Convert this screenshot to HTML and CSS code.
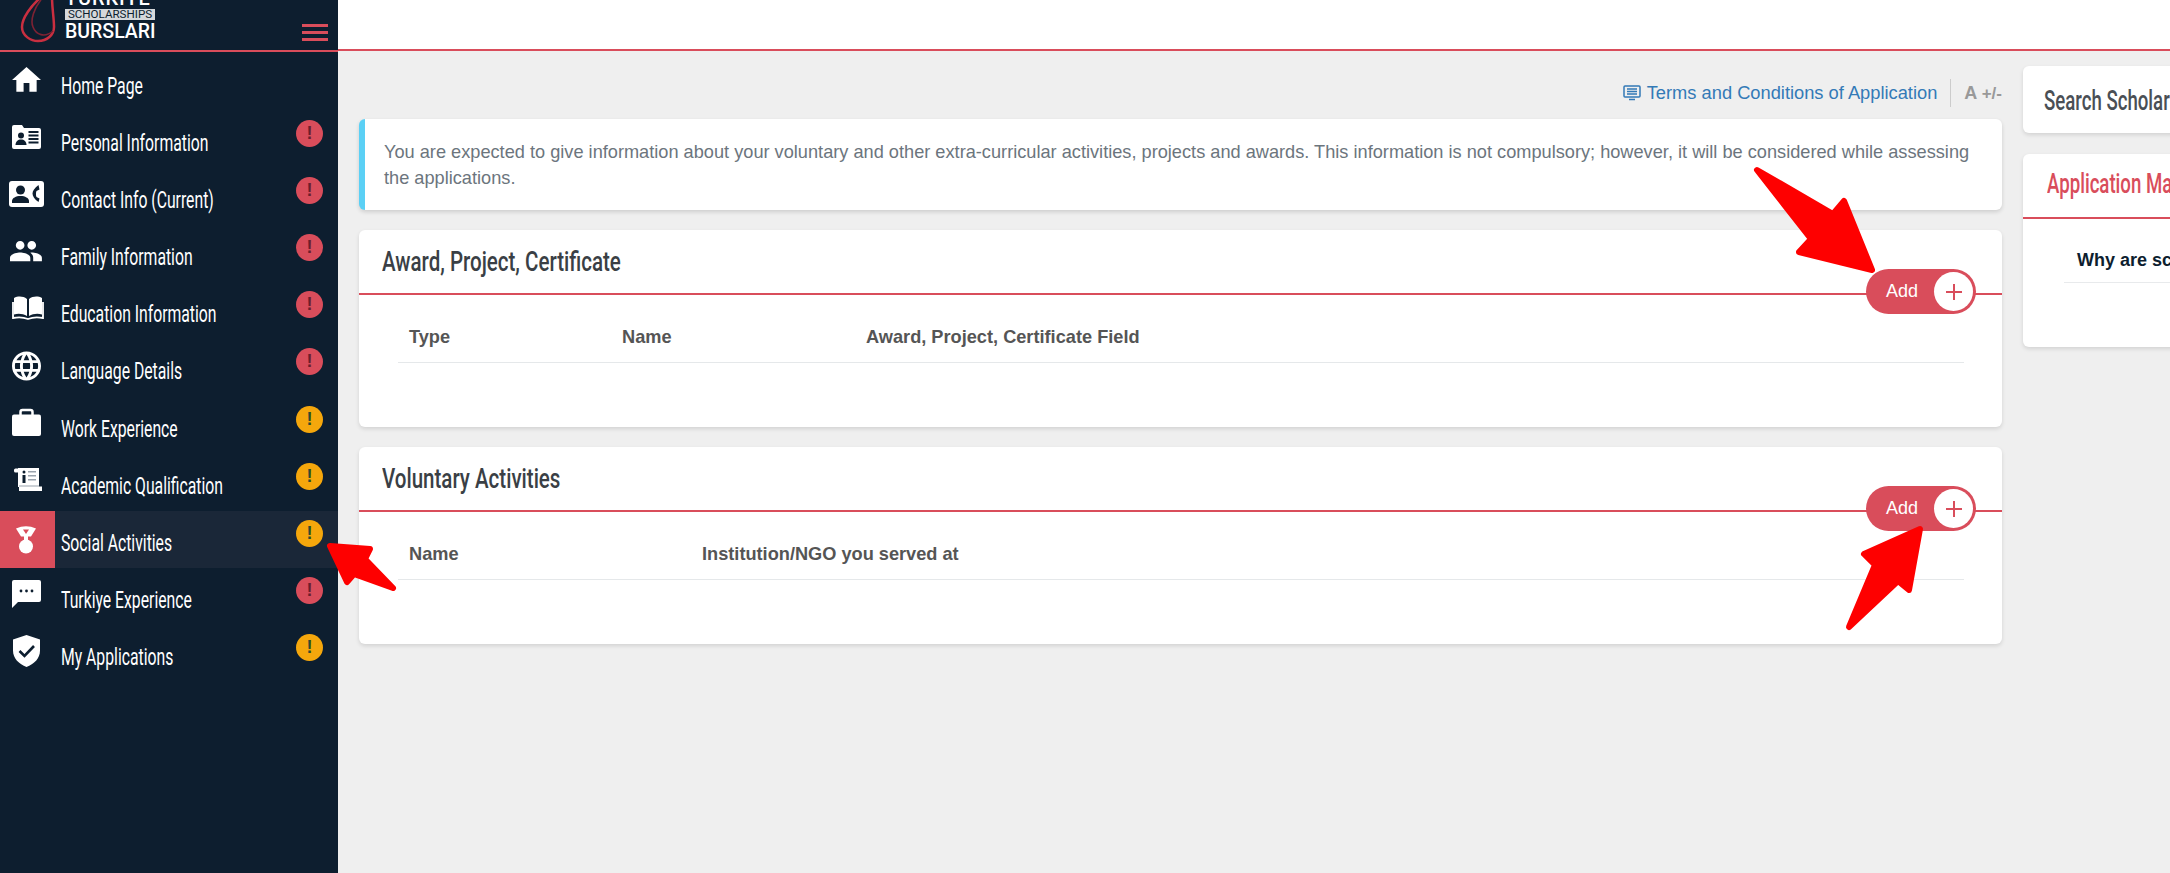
FILE: index.html
```html
<!DOCTYPE html>
<html lang="en">
<head>
<meta charset="utf-8">
<title>Social Activities</title>
<link rel="stylesheet" href="styles.css">
</head>
<body>
<div class="app">
  <aside class="sidebar">
    <div class="brand">
      <svg class="brand-mark" viewBox="0 0 40 50" aria-hidden="true">
        <path class="ring-a" d="M22-3C12 6 3 18 3 27c0 9 9 14 16 14 9 0 16-6 16-14 0-9-2-19-2-30"/>
        <path class="ring-b" d="M24-3C15 8 11 20 14 27c3 8 12 11 20 4"/>
      </svg>
      <div class="brand-text">
        <span class="brand-top">TÜRKİYE</span>
        <span class="brand-mid">SCHOLARSHIPS</span>
        <span class="brand-bottom">BURSLARI</span>
      </div>
      <div class="burger"><i></i><i></i><i></i></div>
    </div>
    <nav class="menu">
      <a class="item">
        <svg class="ico" viewBox="0 0 55 40"><path transform="translate(9.1 2.65) scale(1.45)" d="M10 20v-6h4v6h5v-8h3L12 3 2 12h3v8z"/></svg>
        <span class="label"><span>Home Page</span></span>
      </a>
      <a class="item">
        <svg class="ico" viewBox="0 0 55 40"><path d="M14 8h8l2 3h15a2 2 0 0 1 2 2v17a2 2 0 0 1-2 2H14a2 2 0 0 1-2-2V10a2 2 0 0 1 2-2z"/><g class="cut"><circle cx="21" cy="18.500" r="3"/><path d="M15.500 28c0-3.500 2.500-5.500 5.500-5.500s5.500 2 5.500 5.500z"/><rect x="28.500" y="14" width="10" height="2"/><rect x="28.500" y="17.500" width="10" height="2"/><rect x="28.500" y="21" width="10" height="2"/><rect x="28.500" y="24.500" width="10" height="2"/></g></svg>
        <span class="label"><span>Personal Information</span></span>
        <b class="badge red">!</b>
      </a>
      <a class="item">
        <svg class="ico" viewBox="0 0 55 40"><rect x="9" y="7" width="35" height="26" rx="3"/><g class="cut"><circle cx="20.500" cy="16" r="4.500"/><path d="M12 29v-2c0-3 4-5 8.500-5s8.500 2 8.500 5v2z"/><path d="M38.500 11c-4 3-6 6-6 8.500s2 6 6 8.500l1-3.500-3-1.500c-.7-1.500-.7-4.500 0-6l3-1.500z"/></g></svg>
        <span class="label"><span>Contact Info (Current)</span></span>
        <b class="badge red">!</b>
      </a>
      <a class="item">
        <svg class="ico" viewBox="0 0 55 40"><path transform="translate(8.55 2.75) scale(1.45)" d="M16 11c1.660 0 2.990-1.340 2.990-3S17.660 5 16 5c-1.660 0-3 1.340-3 3s1.340 3 3 3zm-8 0c1.660 0 2.990-1.340 2.990-3S9.660 5 8 5C6.340 5 5 6.340 5 8s1.340 3 3 3zm0 2c-2.330 0-7 1.170-7 3.500V19h14v-2.500c0-2.330-4.670-3.500-7-3.500zm8 0c-.29 0-.62.02-.97.05 1.160.84 1.970 1.970 1.970 3.450V19h6v-2.500c0-2.330-4.670-3.500-7-3.500z"/></svg>
        <span class="label"><span>Family Information</span></span>
        <b class="badge red">!</b>
      </a>
      <a class="item">
        <svg class="ico" viewBox="0 0 55 40"><path d="M14 10c4-2 9-2 13 1v17c-4-2.500-9-3-13-1.500z"/><path d="M29 11c4-3 9-3 13-1v16.500c-4-1.500-9-1-13 1.500z"/><path class="line" d="M13 14v16c5-1 10-1 15 1 5-2 10-2 15-1V14"/></svg>
        <span class="label"><span>Education Information</span></span>
        <b class="badge red">!</b>
      </a>
      <a class="item">
        <svg class="ico" viewBox="0 0 55 40"><path transform="translate(9.1 3.6) scale(1.45)" d="M11.99 2C6.47 2 2 6.48 2 12s4.47 10 9.99 10C17.52 22 22 17.52 22 12S17.52 2 11.99 2zm6.93 6h-2.95c-.32-1.25-.78-2.45-1.38-3.56 1.84.63 3.37 1.91 4.33 3.56zM12 4.040c.83 1.200 1.480 2.530 1.910 3.960h-3.820c.43-1.430 1.080-2.760 1.910-3.960zM4.260 14C4.100 13.360 4 12.690 4 12s.1-1.360.26-2h3.380c-.08.66-.14 1.320-.14 2 0 .68.06 1.340.14 2H4.260zm.82 2h2.950c.32 1.250.78 2.450 1.380 3.560-1.840-.63-3.370-1.900-4.330-3.560zm2.950-8H5.080c.96-1.660 2.490-2.930 4.330-3.560C8.810 5.550 8.350 6.750 8.030 8zM12 19.960c-.83-1.200-1.480-2.530-1.910-3.960h3.820c-.43 1.430-1.080 2.760-1.910 3.960zM14.340 14H9.660c-.09-.66-.16-1.320-.16-2 0-.68.07-1.350.16-2h4.680c.09.65.16 1.320.16 2 0 .68-.07 1.340-.16 2zm.25 5.560c.6-1.110 1.060-2.310 1.380-3.560h2.950c-.96 1.650-2.490 2.930-4.330 3.560zM16.360 14c.08-.66.14-1.320.14-2 0-.68-.06-1.340-.14-2h3.380c.16.64.26 1.310.26 2s-.1 1.360-.26 2h-3.380z"/></svg>
        <span class="label"><span>Language Details</span></span>
        <b class="badge red">!</b>
      </a>
      <a class="item">
        <svg class="ico" viewBox="0 0 55 40"><path class="line thick" d="M20.500 12V9a2 2 0 0 1 2-2h8a2 2 0 0 1 2 2v3"/><rect x="12" y="11.500" width="29" height="21.500" rx="2"/></svg>
        <span class="label"><span>Work Experience</span></span>
        <b class="badge amber">!</b>
      </a>
      <a class="item">
        <svg class="ico" viewBox="0 0 55 40"><rect x="18" y="8" width="21" height="19"/><rect x="14" y="8.500" width="5" height="4" rx="1.500"/><rect x="19" y="26.500" width="23" height="4.500"/><g class="cut"><circle cx="24" cy="12" r="1.500"/><rect x="22.500" y="15" width="3" height="8"/></g><g class="soft"><rect x="28" y="11" width="8" height="1.500"/><rect x="28" y="15" width="8" height="1.500"/><rect x="28" y="19" width="8" height="1.500"/></g><rect class="soft" x="19" y="25.500" width="20" height="1"/></svg>
        <span class="label"><span>Academic Qualification</span></span>
        <b class="badge amber">!</b>
      </a>
      <a class="item active">
        <svg class="ico" viewBox="0 0 55 40"><path d="M16 11.500Q26 7 36 11.500L31 19.500h-3v4h-4v-4h-3z"/><path class="notch" d="M23 12.500h6l-3 4.500z"/><circle cx="26" cy="29.500" r="7"/></svg>
        <span class="label"><span>Social Activities</span></span>
        <b class="badge amber">!</b>
      </a>
      <a class="item">
        <svg class="ico" viewBox="0 0 55 40"><path d="M14 6h25a2 2 0 0 1 2 2v18a2 2 0 0 1-2 2H18l-6 6V8a2 2 0 0 1 2-2z"/><g class="cut"><circle cx="21" cy="17" r="1.400"/><circle cx="26.500" cy="17" r="1.400"/><circle cx="32" cy="17" r="1.400"/></g></svg>
        <span class="label"><span>Turkiye Experience</span></span>
        <b class="badge red">!</b>
      </a>
      <a class="item">
        <svg class="ico" viewBox="0 0 55 40"><path d="M26.500 4L40 8.500v11c0 8-6 13.500-13.500 16.500C19 33 13 27.500 13 19.500v-11z"/><path class="check" d="M19.500 20l5 5 9.500-10"/></svg>
        <span class="label"><span>My Applications</span></span>
        <b class="badge amber">!</b>
      </a>
    </nav>
  </aside>

  <div class="page">
    <header class="topbar"></header>
    <div class="content">
      <main class="main">
        <div class="tools">
          <svg class="terms-ico" viewBox="0 0 18 16"><path d="M2 1h14a1 1 0 0 1 1 1v9a1 1 0 0 1-1 1H2a1 1 0 0 1-1-1V2a1 1 0 0 1 1-1z"/><path d="M4 4h10M4 6.500h10M4 9h10M6 14.500h6"/></svg>
          <a class="terms">Terms and Conditions of Application</a>
          <span class="font-size">A <small>+/-</small></span>
        </div>
        <section class="notice">You are expected to give information about your voluntary and other extra-curricular activities, projects and awards. This information is not compulsory; however, it will be considered while assessing the applications.</section>
        <section class="card">
          <div class="card-head">
            <h2><span>Award, Project, Certificate</span></h2>
            <button class="add"><span>Add</span><i><svg viewBox="0 0 18 18"><path d="M9 1v16M1 9h16"/></svg></i></button>
          </div>
          <div class="card-body">
            <table class="tbl">
              <thead><tr><th class="c-type">Type</th><th class="c-name">Name</th><th>Award, Project, Certificate Field</th></tr></thead>
            </table>
          </div>
        </section>
        <section class="card">
          <div class="card-head">
            <h2><span>Voluntary Activities</span></h2>
            <button class="add"><span>Add</span><i><svg viewBox="0 0 18 18"><path d="M9 1v16M1 9h16"/></svg></i></button>
          </div>
          <div class="card-body">
            <table class="tbl">
              <thead><tr><th class="c-vname">Name</th><th>Institution/NGO you served at</th></tr></thead>
            </table>
          </div>
        </section>
      </main>
      <aside class="side">
        <section class="search-card"><h3><span>Search Scholarship</span></h3></section>
        <section class="manual">
          <h3><span>Application Manual</span></h3>
          <div class="manual-body"><div class="faq">Why are scholarships important?</div></div>
        </section>
      </aside>
    </div>
  </div>
</div>

<svg class="arrows" viewBox="0 0 2170 873" aria-hidden="true">
  <path d="M1757 170L1833 214L1844 201L1872 270L1799 252L1811 239Z"/>
  <path d="M1920 529L1909 590L1898 581L1849 627L1875 565L1864 554Z"/>
  <path d="M330 546L370 549L365 559L393 588L354 574L347 582Z"/>
</svg>
</body>
</html>
```
FILE: styles.css
```css
* { box-sizing: border-box; }
html, body { margin: 0; height: 100%; overflow: hidden; }
body { background: #efefef; font-family: "Liberation Sans", Arial, sans-serif; }
.app { display: flex; width: 2170px; height: 873px; overflow: hidden; }

.sidebar { flex: 0 0 338px; min-width: 0; width: 338px; overflow: hidden; background: #0d1e2f; color: #fff; }
.brand { display: flex; height: 52px; border-bottom: 2px solid #d94d5b; overflow: hidden; position: relative; }
.brand-mark { flex: 0 0 40px; width: 40px; height: 50px; margin-left: 19px; }
.ring-a, .ring-b { fill: none; stroke: #c92f40; stroke-width: 2.500; }
.ring-b { stroke: #7d2233; stroke-width: 1.600; }
.brand-text { display: flex; flex-direction: column; width: 90px; margin: -10px 0 0 6px; color: #fff; font-family: Roboto, sans-serif; }
.brand-top { font-size: 20px; line-height: 17px; font-weight: 500; letter-spacing: .9px; height: 19px; white-space: nowrap; }
.brand-mid { width: 90px; background: #d5d8db; color: #0d1e2f; font-size: 11.600px; line-height: 11px; height: 11px; text-align: center; white-space: nowrap; }
.brand-bottom { font-size: 19.500px; line-height: 20px; margin-top: 2px; font-weight: 500; white-space: nowrap; }
.burger { display: flex; flex-direction: column; gap: 4px; width: 26px; margin: 24px 10px 0 auto; }
.burger i { display: block; height: 3px; background: #d94d5b; }

.menu { display: flex; flex-direction: column; padding-top: 2px; }
.item { display: flex; align-items: flex-start; height: 57.100px; }
.ico { flex: 0 0 55px; width: 55px; height: 40px; margin-top: 6px; fill: #fff; }
.cut { fill: #0d1e2f; }
.soft { fill: #9aa3ad; }
.line { fill: none; stroke: #fff; stroke-width: 1.800; }
.line.thick { stroke-width: 2.500; }
.check { fill: none; stroke: #0d1e2f; stroke-width: 2.600; }
.notch { fill: #d94d5b; }
.label { flex: 1; min-width: 0; padding: 17px 0 0 6px; font-family: Roboto, "Liberation Sans", sans-serif; font-size: 23.500px; line-height: 30px; white-space: nowrap; }
.label span { display: inline-block; transform: scaleX(.67); transform-origin: 0 50%; }
.badge { flex: 0 0 27px; width: 27px; height: 27px; margin: 9px 15px 0 0; border-radius: 50%; text-align: center; font: bold 18px/27px "Liberation Sans", sans-serif; }
.badge.red { background: #d94d5b; color: #6b1f2d; }
.badge.amber { background: #f5a70c; color: #2d4b2c; }
.active { background: #1a2738; }
.active .ico { height: 57px; padding: 6px 0 11px; margin-top: 0; background: #d94d5b; }

.page { flex: 1; min-width: 0; }
.topbar { height: 51px; background: #fff; border-bottom: 2px solid #d94d5b; }
.content { display: grid; grid-template-columns: 1643px 300px; gap: 21px; padding: 15px 0 0 21px; }

.main { display: flex; flex-direction: column; }
.tools { display: flex; align-items: center; justify-content: flex-end; height: 53px; padding-top: 1px; }
.terms-ico { width: 18px; height: 16px; margin-right: 6px; fill: none; stroke: #337ab7; stroke-width: 1.500; }
.terms { color: #337ab7; font-size: 18.300px; }
.font-size { margin-left: 13px; padding-left: 13px; height: 28px; line-height: 28px; border-left: 1px solid #ccc; color: #999; font-size: 18px; font-weight: bold; white-space: nowrap; }
.font-size small { font-size: 17px; }

.notice { height: 91px; padding: 20px 20px 0 19px; background: #fff; border-left: 6px solid #5bd0f5; border-radius: 6px; box-shadow: 0 2px 4px rgba(0,0,0,.14); color: #6c757d; font-size: 18.200px; line-height: 26px; }

.card { height: 197px; margin-top: 20px; background: #fff; border-radius: 6px; box-shadow: 0 2px 4px rgba(0,0,0,.12); }
.card + .card { margin-top: 20px; }
.card-head { position: relative; height: 65px; padding-left: 23px; border-bottom: 2px solid #d94d5b; }
.card-head h2 { margin: 0; padding-top: 15px; color: #3a3f45; font-family: Roboto, "Liberation Sans", sans-serif; font-size: 28px; line-height: 34px; font-weight: 500; white-space: nowrap; }
.card-head h2 span { display: inline-block; transform: scaleX(.733); transform-origin: 0 50%; }
.search-card h3 span, .manual h3 span { display: inline-block; transform: scaleX(.69); transform-origin: 0 50%; }
.add { position: absolute; right: 26px; top: 39px; display: flex; align-items: center; width: 110px; height: 45px; padding: 0 3px 0 20px; border: 0; border-radius: 23px; background: #d94d5b; color: #fff; font: 18px "Liberation Sans", sans-serif; }
.add span { flex: 1; text-align: left; }
.add i { display: flex; align-items: center; justify-content: center; width: 39px; height: 39px; border-radius: 50%; background: #fff; }
.add svg { width: 18px; height: 18px; fill: none; stroke: #d94d5b; stroke-width: 2; }

.card-body { padding: 21px 38px 0 39px; }
.tbl { width: 100%; border-collapse: collapse; table-layout: fixed; }
.tbl th { height: 46px; padding: 0 0 2px 11px; border-bottom: 1px solid #e5e8ea; color: #555; font-size: 18.200px; text-align: left; white-space: nowrap; }
.c-type { width: 213px; }
.c-name { width: 244px; }
.c-vname { width: 293px; }

.side { display: flex; flex-direction: column; min-width: 0; }
.search-card { height: 67px; background: #fff; border-radius: 6px; box-shadow: 0 2px 4px rgba(0,0,0,.12); padding: 19px 0 0 21px; }
.search-card h3, .manual h3 { margin: 0; font-family: Roboto, "Liberation Sans", sans-serif; font-size: 27px; line-height: 32px; font-weight: 500; white-space: nowrap; }
.search-card h3 { color: #4a4f55; }
.manual { height: 193px; margin-top: 21px; background: #fff; border-radius: 6px; box-shadow: 0 2px 4px rgba(0,0,0,.12); overflow: hidden; }
.manual h3 { height: 65px; padding: 14px 0 0 24px; color: #d94d5b; border-bottom: 2px solid #d94d5b; }
.manual-body { padding: 31px 0 0 41px; }
.faq { padding: 0 0 11px 13px; border-bottom: 1px solid #e8eaec; color: #0d1e2f; font-size: 18px; font-weight: bold; line-height: 21px; white-space: nowrap; }

.arrows { position: fixed; left: 0; top: 0; width: 2170px; height: 873px; pointer-events: none; }
.arrows path { fill: #fe0000; stroke: #fe0000; stroke-width: 6; stroke-linejoin: round; }
```
